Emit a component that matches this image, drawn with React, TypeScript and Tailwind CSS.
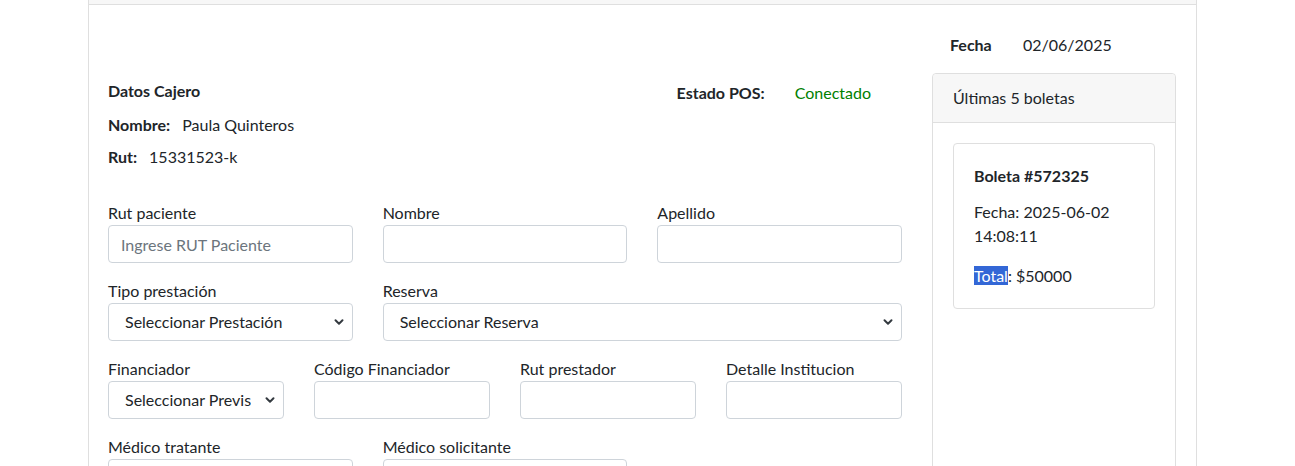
import React from "react";

function Chevron() {
  return (
    <svg
      className="pointer-events-none absolute right-[9px] top-1/2 -translate-y-1/2"
      width="10"
      height="7"
      viewBox="0 0 10 7"
      fill="none"
    >
      <path d="M1.5 1.8 5 5.2 8.5 1.8" stroke="#343a40" strokeWidth="2" strokeLinecap="round" strokeLinejoin="round" />
    </svg>
  );
}

function Field({ label, placeholder }: { label: string; placeholder?: string }) {
  return (
    <div className="mb-4">
      <label className="block leading-6">{label}</label>
      <input
        placeholder={placeholder}
        className="block h-[38px] w-full rounded-[4px] border border-[#ced4da] bg-white px-3 text-base text-[#212529] outline-none placeholder:text-[#6c757d]"
      />
    </div>
  );
}

function SelectField({ label, value, className }: { label: string; value: string; className?: string }) {
  return (
    <div className={"mb-4 " + (className ?? "")}>
      <label className="block leading-6">{label}</label>
      <div className="relative">
        <select
          defaultValue={value}
          className="block h-[38px] w-full appearance-none overflow-hidden rounded-[4px] border border-[#ced4da] bg-white pl-4 pr-8 text-base text-[#212529] outline-none"
        >
          <option>{value}</option>
        </select>
        <Chevron />
      </div>
    </div>
  );
}

export default function App() {
  return (
    <div className="min-h-screen bg-white font-['Lato','Liberation_Sans',sans-serif] text-base text-[#212529]">
      <div className="ml-[88px] w-[1109px] border-x border-[#dfdfdf]">
        <div className="h-[5px] border-b border-[#dfdfdf] bg-[#f7f7f7]" />
        <div className="flex items-start gap-[30px] px-[19px]">
          {/* columna izquierda */}
          <div className="w-[794px] pt-[74px]">
            <div className="flex items-start justify-between pr-[31px]">
              <div className="font-bold leading-6">Datos Cajero</div>
              <div className="mt-[2px] flex leading-6">
                <span className="mr-[30px] font-bold">Estado POS:</span>
                <span className="text-[#008000]">Conectado</span>
              </div>
            </div>
            <div className="mt-2 leading-6">
              <span className="mr-3 font-bold">Nombre:</span>
              <span>Paula Quinteros</span>
            </div>
            <div className="mt-2 leading-6">
              <span className="mr-3 font-bold">Rut:</span>
              <span>15331523-k</span>
            </div>

            <div className="mt-8 grid grid-cols-3 gap-x-[30px]">
              <Field label="Rut paciente" placeholder="Ingrese RUT Paciente" />
              <Field label="Nombre" />
              <Field label="Apellido" />
            </div>
            <div className="grid grid-cols-3 gap-x-[30px]">
              <SelectField label="Tipo prestación" value="Seleccionar Prestación" />
              <SelectField label="Reserva" value="Seleccionar Reserva" className="col-span-2" />
            </div>
            <div className="grid grid-cols-4 gap-x-[30px]">
              <SelectField label="Financiador" value="Seleccionar Previsión" />
              <Field label="Código Financiador" />
              <Field label="Rut prestador" />
              <Field label="Detalle Institucion" />
            </div>
            <div className="grid grid-cols-3 gap-x-[30px]">
              <Field label="Médico tratante" />
              <Field label="Médico solicitante" />
            </div>
          </div>

          {/* columna derecha */}
          <div className="w-[244px] pt-[28px]">
            <div className="mb-4 flex pl-[18px] leading-6">
              <span className="w-[73px] font-bold">Fecha</span>
              <span>02/06/2025</span>
            </div>
            <div className="rounded-[4px] border border-[#dfdfdf]">
              <div className="rounded-t-[4px] border-b border-[#dfdfdf] bg-[#f7f7f7] px-5 py-3 leading-6">
                Últimas 5 boletas
              </div>
              <div className="min-h-[400px] p-5">
                <div className="rounded-[4px] border border-[#dfdfdf] p-5 leading-6">
                  <div className="mb-3 font-bold">Boleta #572325</div>
                  <div className="mb-4">Fecha: 2025-06-02 14:08:11</div>
                  <div>
                    <span className="bg-[#3367d6] text-white">Total</span>: $50000
                  </div>
                </div>
              </div>
            </div>
          </div>
        </div>
      </div>
    </div>
  );
}
